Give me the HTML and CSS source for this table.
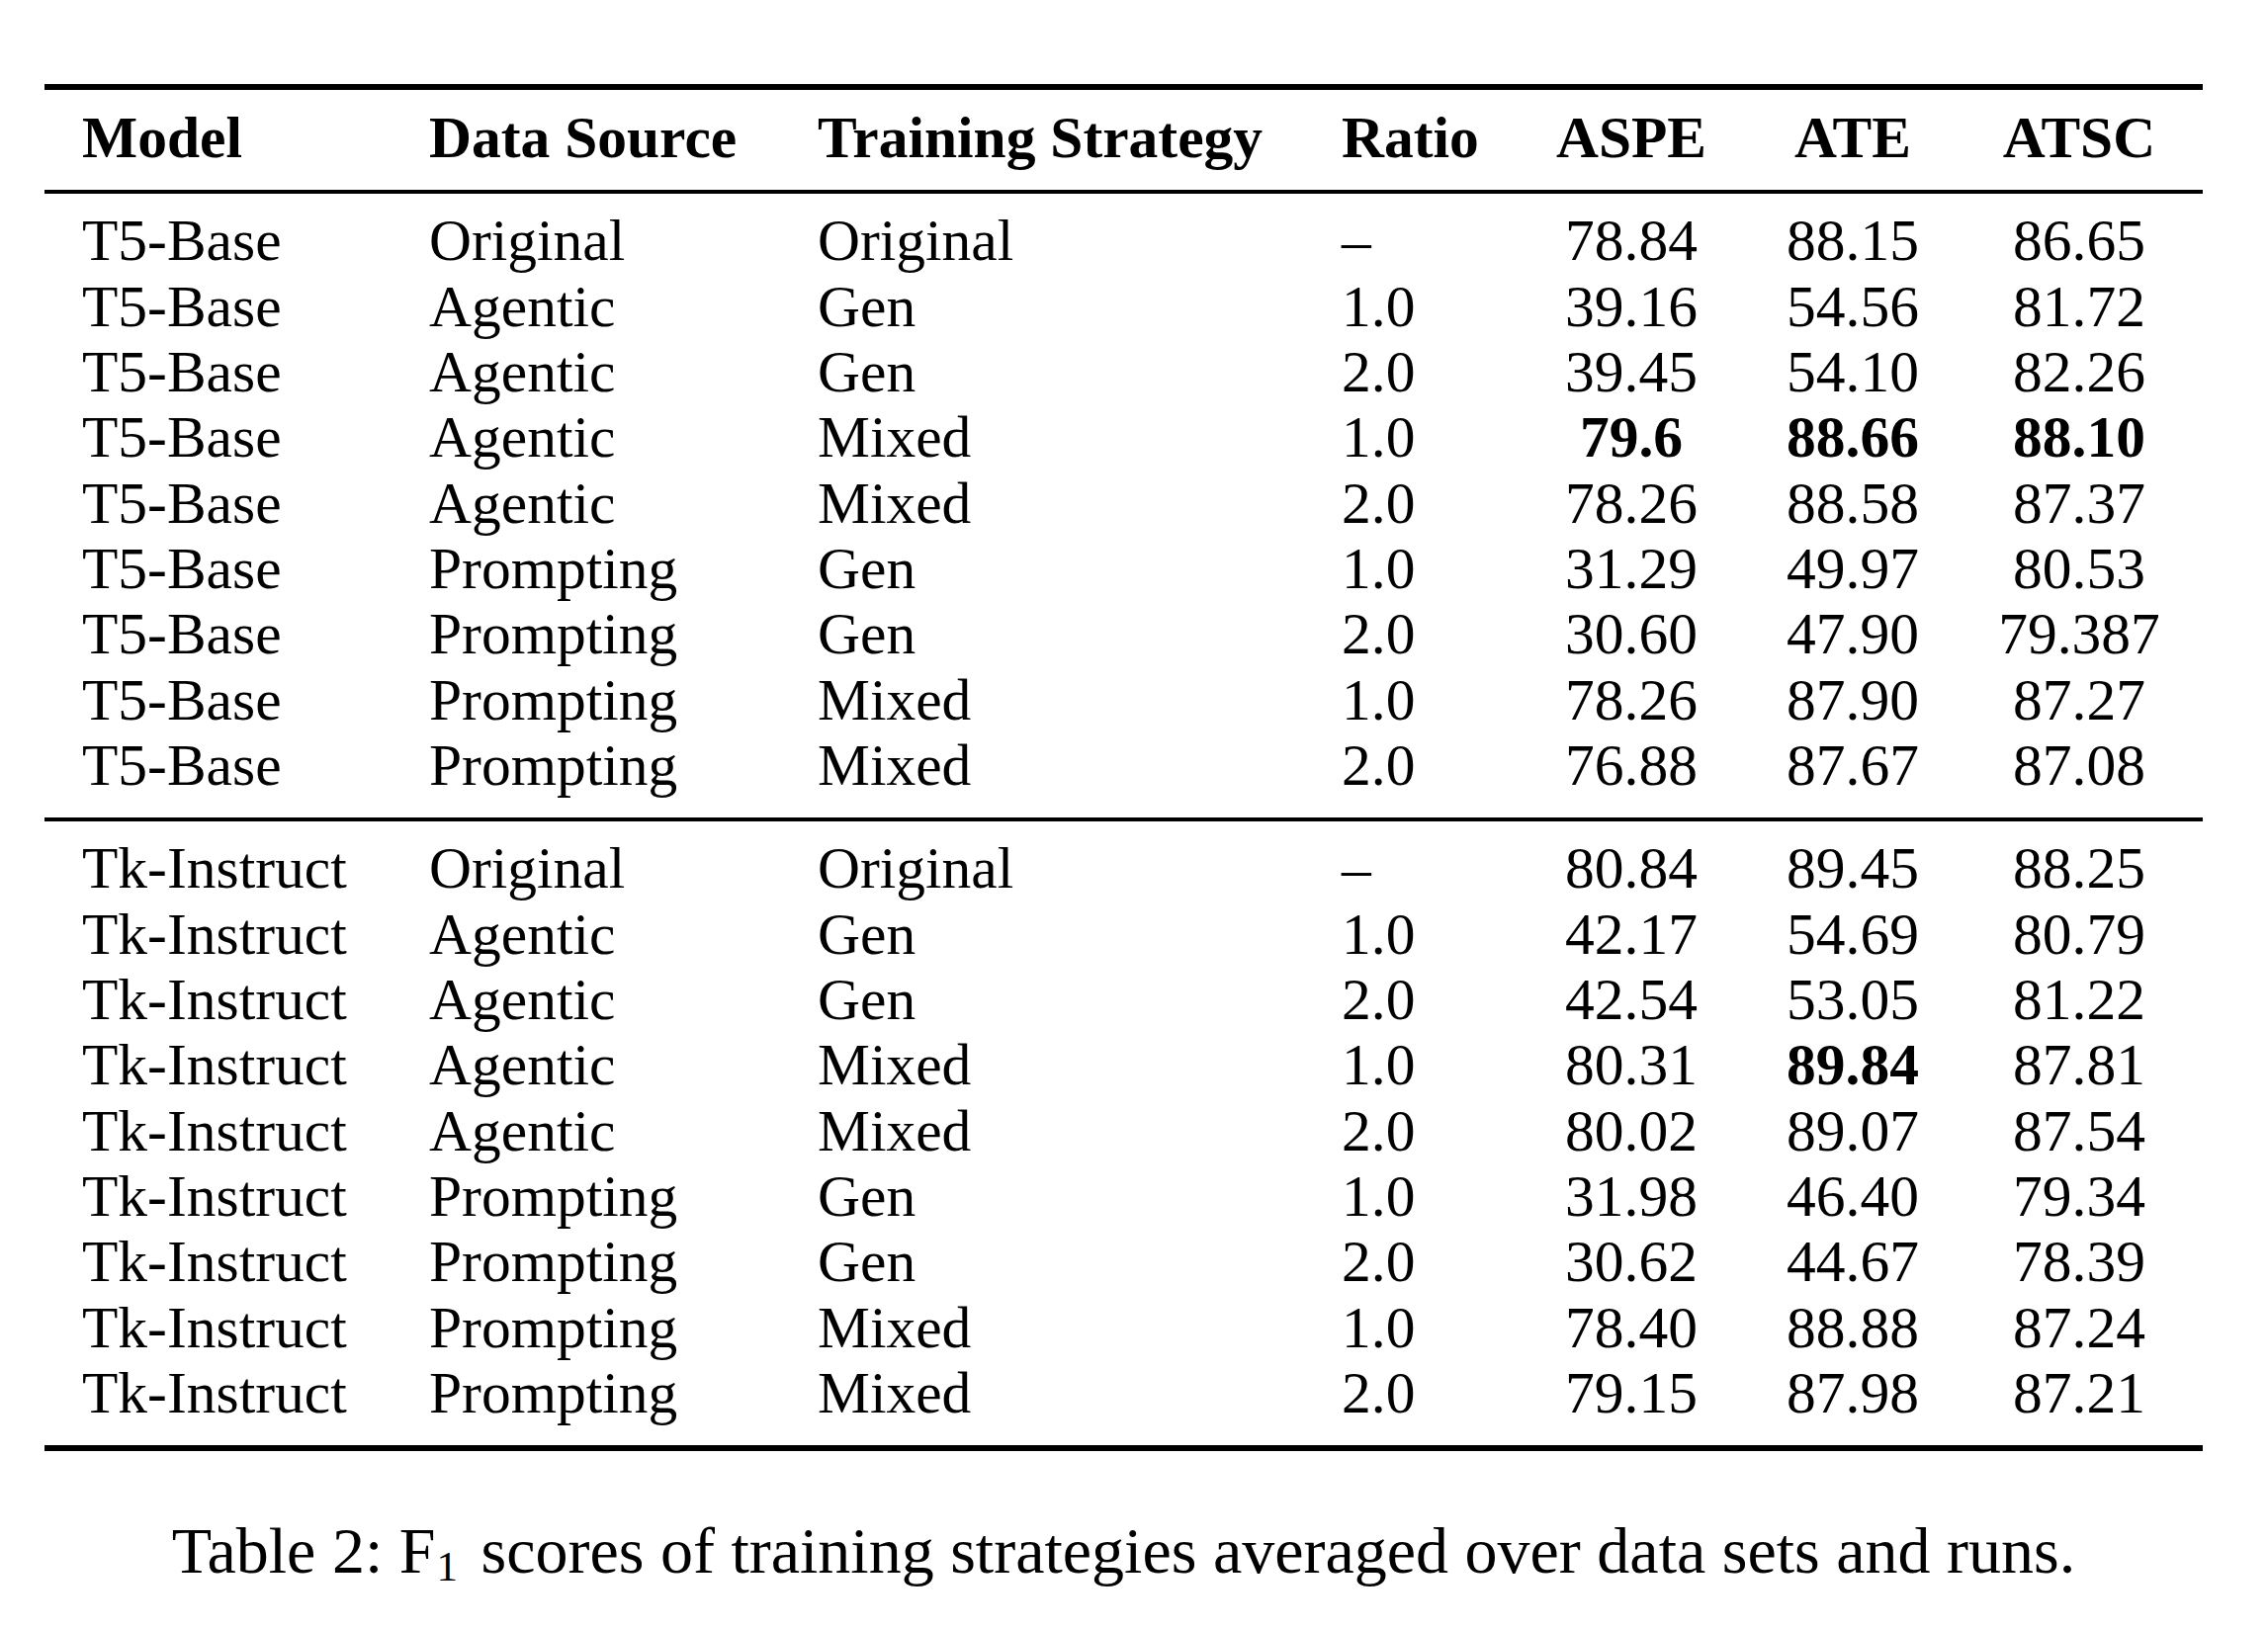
FILE: index.html
```html
<!DOCTYPE html>
<html lang="en">
<head>
<meta charset="utf-8">
<title>Table 2</title>
<link rel="stylesheet" href="styles.css">
</head>
<body>
<div class="figure">
  <div class="tbl" role="table">
    <div class="head" role="rowgroup">
      <div class="row" role="row">
        <div class="c">Model</div><div class="c">Data Source</div><div class="c">Training Strategy</div><div class="c">Ratio</div><div class="n">ASPE</div><div class="n">ATE</div><div class="n">ATSC</div>
      </div>
    </div>
    <div class="group" role="rowgroup">
      <div class="row" role="row"><div class="c">T5-Base</div><div class="c">Original</div><div class="c">Original</div><div class="c">–</div><div class="n">78.84</div><div class="n">88.15</div><div class="n">86.65</div></div>
      <div class="row" role="row"><div class="c">T5-Base</div><div class="c">Agentic</div><div class="c">Gen</div><div class="c">1.0</div><div class="n">39.16</div><div class="n">54.56</div><div class="n">81.72</div></div>
      <div class="row" role="row"><div class="c">T5-Base</div><div class="c">Agentic</div><div class="c">Gen</div><div class="c">2.0</div><div class="n">39.45</div><div class="n">54.10</div><div class="n">82.26</div></div>
      <div class="row" role="row"><div class="c">T5-Base</div><div class="c">Agentic</div><div class="c">Mixed</div><div class="c">1.0</div><div class="n b">79.6</div><div class="n b">88.66</div><div class="n b">88.10</div></div>
      <div class="row" role="row"><div class="c">T5-Base</div><div class="c">Agentic</div><div class="c">Mixed</div><div class="c">2.0</div><div class="n">78.26</div><div class="n">88.58</div><div class="n">87.37</div></div>
      <div class="row" role="row"><div class="c">T5-Base</div><div class="c">Prompting</div><div class="c">Gen</div><div class="c">1.0</div><div class="n">31.29</div><div class="n">49.97</div><div class="n">80.53</div></div>
      <div class="row" role="row"><div class="c">T5-Base</div><div class="c">Prompting</div><div class="c">Gen</div><div class="c">2.0</div><div class="n">30.60</div><div class="n">47.90</div><div class="n">79.387</div></div>
      <div class="row" role="row"><div class="c">T5-Base</div><div class="c">Prompting</div><div class="c">Mixed</div><div class="c">1.0</div><div class="n">78.26</div><div class="n">87.90</div><div class="n">87.27</div></div>
      <div class="row" role="row"><div class="c">T5-Base</div><div class="c">Prompting</div><div class="c">Mixed</div><div class="c">2.0</div><div class="n">76.88</div><div class="n">87.67</div><div class="n">87.08</div></div>
    </div>
    <div class="group" role="rowgroup">
      <div class="row" role="row"><div class="c">Tk-Instruct</div><div class="c">Original</div><div class="c">Original</div><div class="c">–</div><div class="n">80.84</div><div class="n">89.45</div><div class="n">88.25</div></div>
      <div class="row" role="row"><div class="c">Tk-Instruct</div><div class="c">Agentic</div><div class="c">Gen</div><div class="c">1.0</div><div class="n">42.17</div><div class="n">54.69</div><div class="n">80.79</div></div>
      <div class="row" role="row"><div class="c">Tk-Instruct</div><div class="c">Agentic</div><div class="c">Gen</div><div class="c">2.0</div><div class="n">42.54</div><div class="n">53.05</div><div class="n">81.22</div></div>
      <div class="row" role="row"><div class="c">Tk-Instruct</div><div class="c">Agentic</div><div class="c">Mixed</div><div class="c">1.0</div><div class="n">80.31</div><div class="n b">89.84</div><div class="n">87.81</div></div>
      <div class="row" role="row"><div class="c">Tk-Instruct</div><div class="c">Agentic</div><div class="c">Mixed</div><div class="c">2.0</div><div class="n">80.02</div><div class="n">89.07</div><div class="n">87.54</div></div>
      <div class="row" role="row"><div class="c">Tk-Instruct</div><div class="c">Prompting</div><div class="c">Gen</div><div class="c">1.0</div><div class="n">31.98</div><div class="n">46.40</div><div class="n">79.34</div></div>
      <div class="row" role="row"><div class="c">Tk-Instruct</div><div class="c">Prompting</div><div class="c">Gen</div><div class="c">2.0</div><div class="n">30.62</div><div class="n">44.67</div><div class="n">78.39</div></div>
      <div class="row" role="row"><div class="c">Tk-Instruct</div><div class="c">Prompting</div><div class="c">Mixed</div><div class="c">1.0</div><div class="n">78.40</div><div class="n">88.88</div><div class="n">87.24</div></div>
      <div class="row" role="row"><div class="c">Tk-Instruct</div><div class="c">Prompting</div><div class="c">Mixed</div><div class="c">2.0</div><div class="n">79.15</div><div class="n">87.98</div><div class="n">87.21</div></div>
    </div>
  </div>
  <p class="caption">Table 2: F<sub class="sub">1</sub> scores of training strategies averaged over data sets and runs.</p>
</div>
</body>
</html>
```

FILE: styles.css
```css
html, body {
  margin: 0;
  padding: 0;
  background: #ffffff;
}

body {
  width: 2294px;
  height: 1648px;
  overflow: hidden;
  color: #000000;
  font-family: "Liberation Serif", "Times New Roman", serif;
}

.figure {
  width: 2183px;
  margin: 85px 0 0 45px;
}

.tbl {
  border-top: 6px solid #000;
  border-bottom: 6px solid #000;
  font-size: 59.5px;
}

.head {
  padding: 15px 0 19.7px;
  border-bottom: 4px solid #000;
  font-weight: bold;
}

.group {
  padding: 14.5px 0 19.8px;
}

.group + .group {
  border-top: 4px solid #000;
}

.row {
  display: grid;
  grid-template-columns: 351px 393px 530px 211px 240px 208px 250px;
  height: 66.3px;
  line-height: 66.3px;
}

.c {
  padding-left: 38px;
  white-space: nowrap;
}

.n {
  text-align: center;
  white-space: nowrap;
}

.b {
  font-weight: bold;
}

.caption {
  margin: 64px 0 0;
  font-size: 66px;
  line-height: 73px;
  text-align: center;
  white-space: nowrap;
}

.sub {
  font-size: 43px;
  line-height: 0;
  vertical-align: -8px;
  margin-left: 1px;
  margin-right: 7px;
}
```
